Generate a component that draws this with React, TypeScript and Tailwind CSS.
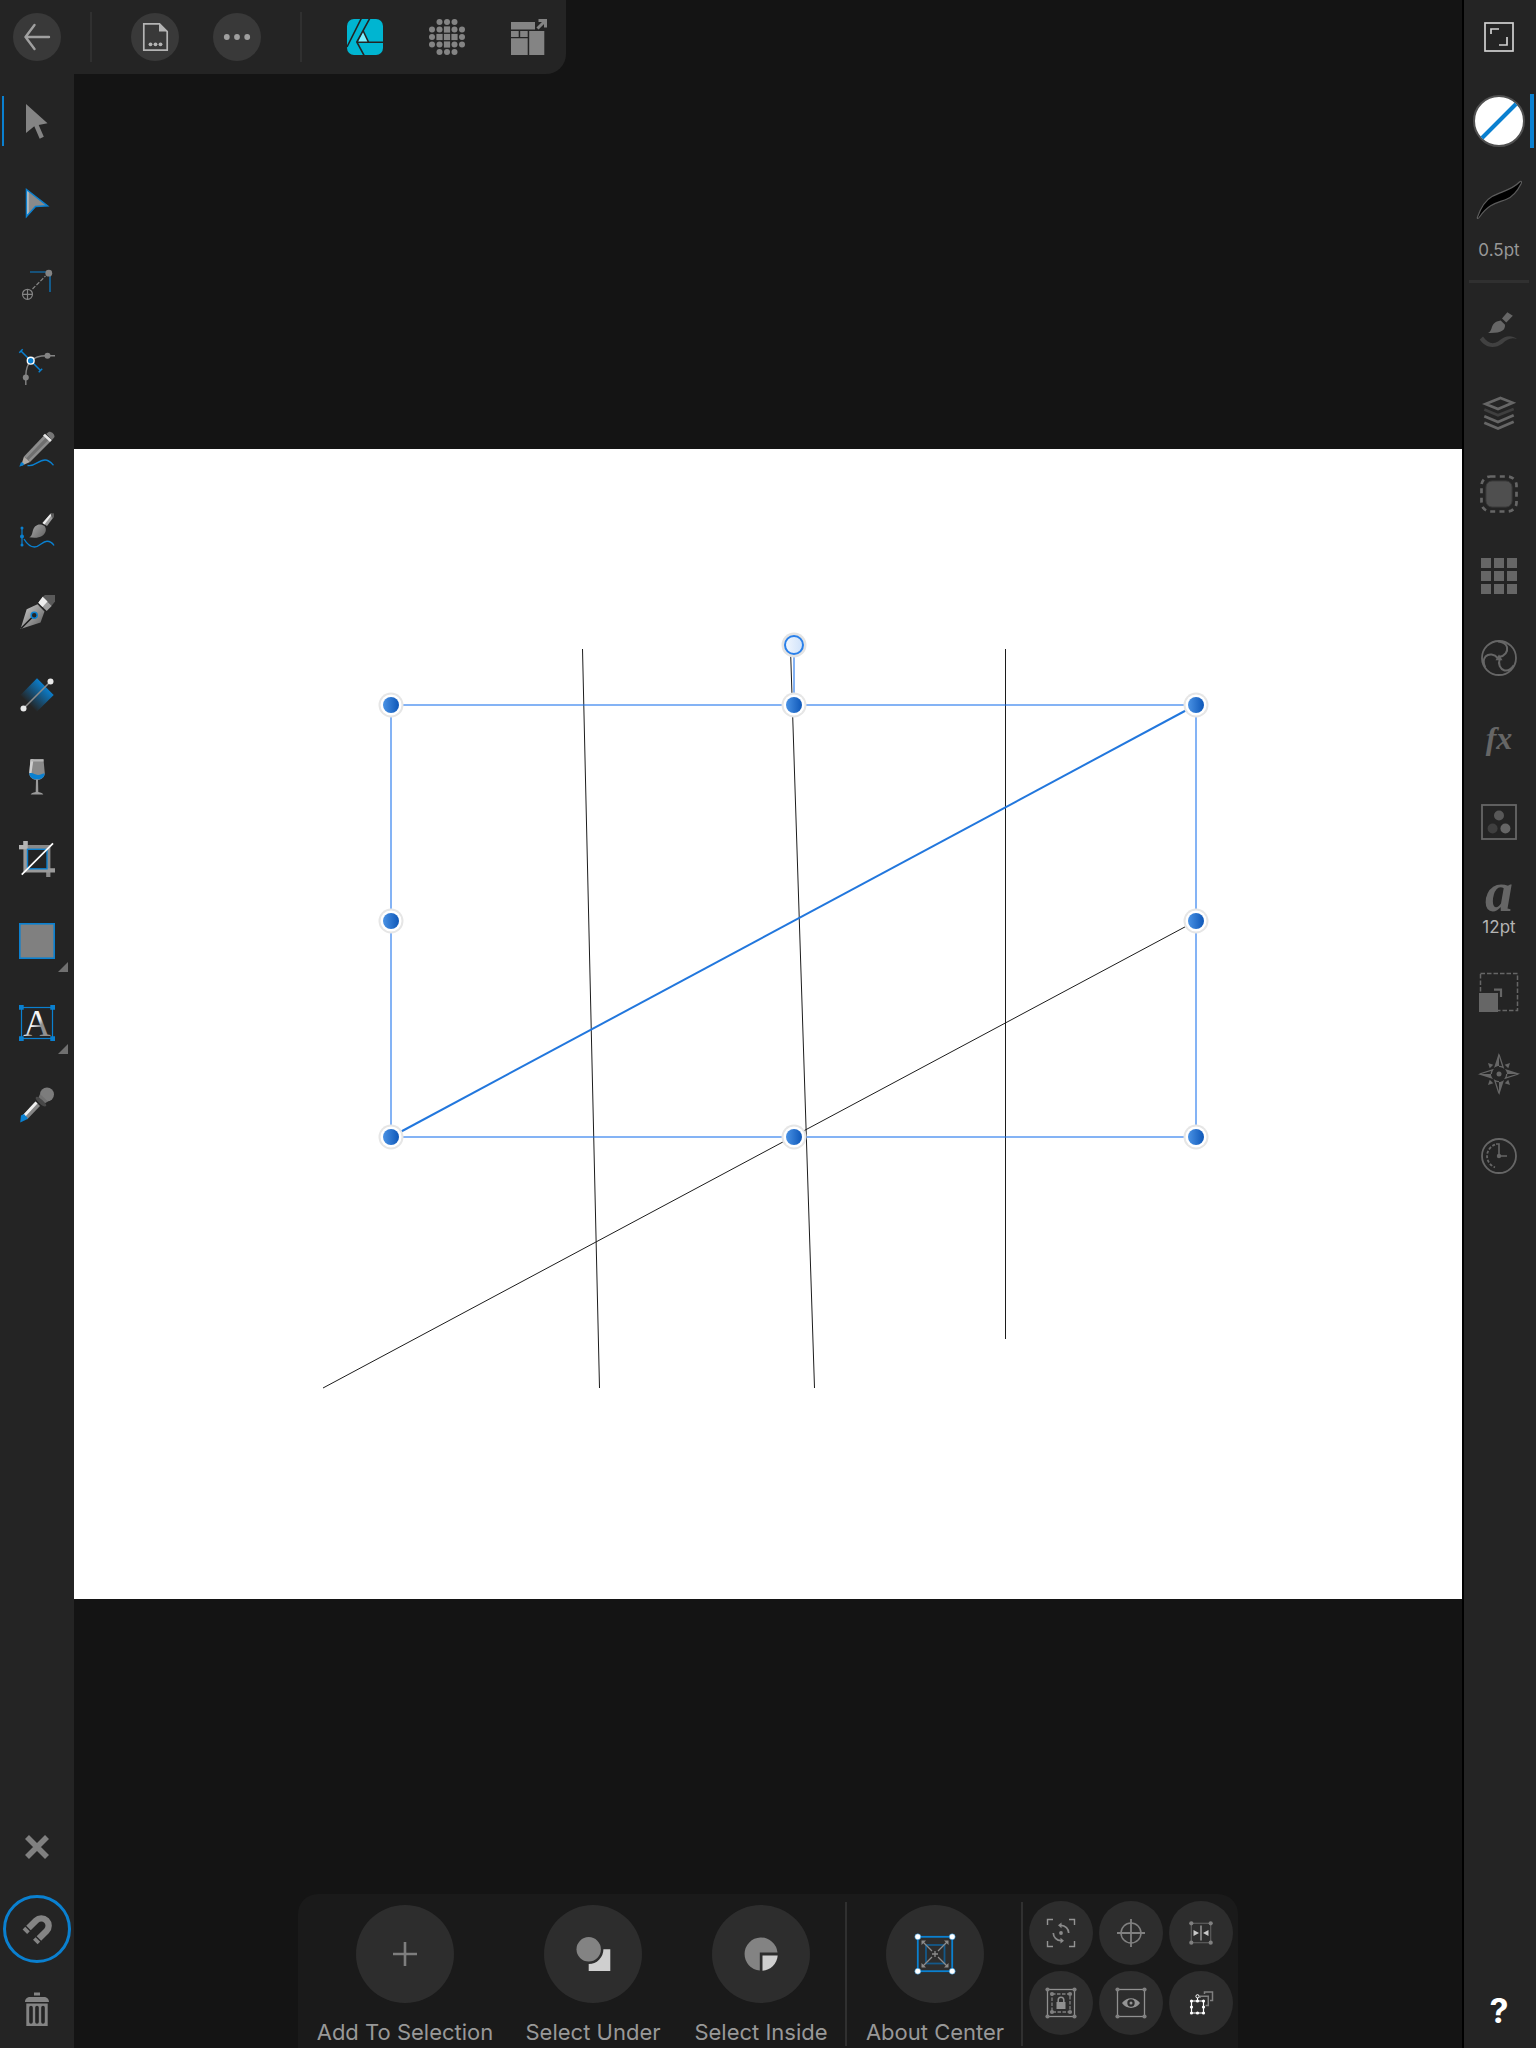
import type { ReactNode } from 'react';
import { clsx } from 'clsx';

const BLUE = '#0a80d0';
const GREY = '#848484';
const DIM = '#666666';

interface IconProps {
  size?: number;
  children: ReactNode;
}

const Icon = ({ size = 36, children }: IconProps) => (
  <svg className="overflow-visible" width={size} height={size} viewBox={`0 0 ${size} ${size}`} fill="none" aria-hidden="true">
    {children}
  </svg>
);

/* ---------- top bar ---------- */

const BackIcon = () => (
  <Icon size={48}>
    <path d="M36 24H12.5M21.5 12L12.5 24L21.5 36" stroke="#a0a0a0" strokeWidth="2.4" strokeLinecap="round" strokeLinejoin="round" />
  </Icon>
);

const DocumentIcon = () => (
  <Icon size={48}>
    <path d="M12.8 10.8H28.5L36.2 18.5V37.2H12.8Z" stroke="#b4b4b4" strokeWidth="1.7" />
    <path d="M28 10.5L36.8 18.5H28Z" fill="#b4b4b4" />
    <g fill="#b4b4b4">
      <circle cx="19.5" cy="31.3" r="1.9" />
      <circle cx="24.5" cy="31.3" r="1.9" />
      <circle cx="29.5" cy="31.3" r="1.9" />
    </g>
  </Icon>
);

const MoreIcon = () => (
  <Icon size={48}>
    <g fill="#a0a0a0">
      <circle cx="13.8" cy="24" r="2.9" />
      <circle cx="24" cy="24" r="2.9" />
      <circle cx="34.2" cy="24" r="2.9" />
    </g>
  </Icon>
);

const DesignerIcon = () => (
  <Icon>
    <defs>
      <clipPath id="badge">
        <rect width="36" height="36" rx="7" />
      </clipPath>
    </defs>
    <g clipPath="url(#badge)">
      <rect width="36" height="36" fill="#00b5d1" />
      <path d="M16.3 11L11 23.3H21.8Z" fill="#7df0ff" />
      <path d="M14.5 -1L0 28M23 -1L9.8 23L17.4 37M16 11.5L21.5 23.2M9.8 23.2H37" stroke="#242424" strokeWidth="1.6" />
    </g>
  </Icon>
);

const DOT_COLS = [3, 10.5, 18, 25.5, 33];

const PixelIcon = () => (
  <Icon>
    {DOT_COLS.map((y, row) =>
      DOT_COLS.map((x, col) => {
        const edge = (n: number) => n === 0 || n === 4;
        if (edge(row) && edge(col)) return null;
        const square = Math.abs(row - 2) + Math.abs(col - 2) <= 1;
        return square ? (
          <rect key={`${row}-${col}`} x={x - 3.1} y={y - 3.1} width="6.2" height="6.2" fill={GREY} />
        ) : (
          <circle key={`${row}-${col}`} cx={x} cy={y} r="3" fill={GREY} />
        );
      })
    )}
  </Icon>
);

const ExportIcon = () => (
  <Icon>
    <path d="M0 3H24V10.5H0ZM0 12H7.7V18H0ZM9.2 12H16.7V18H9.2ZM0 19.3H16.7V36H0ZM18.2 12H33.3V36H18.2Z" fill={GREY} />
    <path d="M26.5 9.5L33.5 2.5" stroke={GREY} strokeWidth="3" />
    <path d="M27.5 0H36V8.5H33V3H27.5Z" fill={GREY} />
  </Icon>
);

/* ---------- left tools ---------- */

const MoveIcon = () => (
  <Icon>
    <path d="M7 1L28.5 20.3L19.7 22L24.8 33.8L20.7 35.7L15.3 23.3L7 30Z" fill={GREY} />
  </Icon>
);

const NodeIcon = () => (
  <Icon>
    <defs>
      <linearGradient id="node" x1="7" x2="15" y1="18" y2="18" gradientUnits="userSpaceOnUse">
        <stop offset="0" stopColor="#ffffff" />
        <stop offset="0.45" stopColor="#8a8a8a" />
      </linearGradient>
    </defs>
    <path d="M7.5 4.5L28.5 20.8L16.5 21.5L7.500 31.500Z" fill="url(#node)" stroke={BLUE} strokeWidth="1.5" />
  </Icon>
);

const PointTransformIcon = () => (
  <Icon>
    <path d="M11 5H31V25" stroke={BLUE} strokeWidth="1.2" />
    <path d="M13.5 22L26.5 9" stroke={GREY} strokeWidth="1.2" strokeDasharray="4 1.6" />
    <circle cx="29.8" cy="6.2" r="3.4" fill={GREY} />
    <circle cx="8.5" cy="27.3" r="5" stroke={GREY} strokeWidth="1.2" />
    <path d="M3.5 27.3H13.5M8.5 22.3V32.3" stroke={GREY} strokeWidth="1.2" />
  </Icon>
);

const CornerIcon = () => (
  <Icon>
    <path d="M6.8 36V27C6.8 14 14 6.8 27 6.8H36" stroke={GREY} strokeWidth="1.4" />
    <circle cx="28.5" cy="6.8" r="3" fill={GREY} />
    <circle cx="6.8" cy="28.5" r="3" fill={GREY} />
    <path d="M2 2L21.5 21.5M0.3 3.7L3.7 0.3M19.7 23.2L23.2 19.7" stroke={BLUE} strokeWidth="1.5" />
    <circle cx="11.7" cy="11.7" r="3.4" fill={BLUE} stroke="#ffffff" strokeWidth="1.4" />
  </Icon>
);

const PencilIcon = () => (
  <Icon>
    <path d="M5 25.5L25 4.5L31.5 10.5L11 31Z" fill="#8c8c8c" />
    <path d="M7 27.5L27 6.5L29.5 9L9 29.5Z" fill="#6f6f6f" />
    <path d="M5 25.5L11 31L2 35Z" fill="#b0aca8" />
    <path d="M24 4.5L26 2.7L33 9L31 11Z" fill="#e6e6e6" />
    <path d="M27.3 2.8L30 0.8C33 0.8 35.5 3 35.5 6L33 9Z" fill="#767676" />
    <path d="M0.3 35.7L2 31.3C4 31.3 5 32.5 5 34Z" fill={BLUE} />
    <path d="M8.5 34.5C16 36 19 29 26 29C30 29 32 31.5 34.5 34.3" stroke={BLUE} strokeWidth="1.4" />
  </Icon>
);

const VectorBrushIcon = () => (
  <Icon>
    <defs>
      <linearGradient id="bristle" x1="12" x2="26" y1="10" y2="22" gradientUnits="userSpaceOnUse">
        <stop offset="0" stopColor="#a8a8a8" />
        <stop offset="1" stopColor="#6a6a6a" />
      </linearGradient>
    </defs>
    <path d="M10.3 24.3C14.5 22.5 12.5 17 16 13.5C19 10.5 23 11 25.5 13C28 16 27 20.5 23 23C19.5 25.3 14 24.8 10.3 24.3Z" fill="url(#bristle)" />
    <path d="M23.5 10L31.5 0.8H35V3.5L28 13Z" fill="#9a9a9a" />
    <path d="M23.5 10L31.5 0.8L33.5 1L25.5 11.5Z" fill="#ededed" />
    <path d="M31.5 0.8H35V4L33 5Z" fill="#5a5a5a" />
    <path d="M3 14.5V32.5" stroke={BLUE} strokeWidth="1.2" />
    <g fill={BLUE}>
      <circle cx="3" cy="15" r="1.5" />
      <circle cx="3" cy="23.5" r="2" />
      <circle cx="3" cy="32" r="1.5" />
    </g>
    <path d="M5 26C8 31 11 34 15.5 34C21 34 23 28.3 28 28.3C31 28.3 33.5 30 35 32.5" stroke={BLUE} strokeWidth="1.4" />
  </Icon>
);

const PenIcon = () => (
  <Icon>
    <defs>
      <linearGradient id="nib" x1="8" x2="24" y1="14" y2="28" gradientUnits="userSpaceOnUse">
        <stop offset="0" stopColor="#b5b5b5" />
        <stop offset="1" stopColor="#6c6c6c" />
      </linearGradient>
    </defs>
    <path d="M1.5 34L7.7 14.3L18.5 9.3L25.5 16.5L21.5 27.5Z" fill="url(#nib)" />
    <path d="M26 0H36V6.5L32.5 11L23.7 1.7Z" fill="#5a5a5a" />
    <path d="M19.3 7.7L23.7 1.7L32.7 11L27.7 16Z" fill="#a0a0a0" />
    <path d="M19.3 7.7L23.7 1.7L28.5 6.5L23.5 12Z" fill="#eeeeee" />
    <path d="M2 33.5L15 20.5" stroke="#1c1c1c" strokeWidth="1.6" />
    <circle cx="15.2" cy="20.3" r="3" fill="#242424" stroke={BLUE} strokeWidth="1.5" />
  </Icon>
);

const GradientIcon = () => (
  <Icon>
    <defs>
      <linearGradient id="fill" x1="10" x2="27" y1="26" y2="9" gradientUnits="userSpaceOnUse">
        <stop offset="0" stopColor={BLUE} stopOpacity="0.05" />
        <stop offset="1" stopColor={BLUE} />
      </linearGradient>
    </defs>
    <path d="M18 1.3L34.7 18L18 34.5L1.5 18Z" fill="url(#fill)" />
    <path d="M4.5 31.5L31.5 4.5" stroke="#8c8c8c" strokeWidth="1.6" />
    <circle cx="4.5" cy="31.5" r="3" fill="#e8e8e8" />
    <circle cx="31.5" cy="4.5" r="3" fill="#e8e8e8" />
  </Icon>
);

const GlassIcon = () => (
  <Icon>
    <path d="M11.5 0.3H24.5L25.8 14.5C25.5 19 21 21 18 21.3C15 21 10.5 19 10.2 14.5Z" fill="#8a8a8a" />
    <path d="M11.5 0.3H14.5L12.5 14H10.2Z" fill="#cfcfcf" />
    <path d="M12.5 0.3H24.5V2.5H12.3Z" fill="#b4b4b4" />
    <path d="M10.2 14.5C14 13 16 16.5 19.5 16C22 15.5 23.5 14 25.8 14.5C25.5 19 21 20.5 18 20.5C15 20.5 10.5 19 10.2 14.5Z" fill={BLUE} />
    <path d="M17 20.500H19L19.3 33C22 33.5 24 34.3 24.3 35.5H11.7C12 34.3 14 33.5 16.7 33Z" fill="#9a9a9a" />
  </Icon>
);

const CropIcon = () => (
  <Icon>
    <path d="M0 6.2H29.3V36" stroke="#8a8a8a" strokeWidth="4.2" />
    <path d="M6.5 0V29.3H36" stroke="#9a9a9a" strokeWidth="4.2" />
    <path d="M0 6.2H8.5M6.5 0V8" stroke="#b4b4b4" strokeWidth="4.2" />
    <rect x="8.5" y="8.3" width="19.5" height="19.5" fill="#242424" stroke={BLUE} strokeWidth="1.4" />
    <path d="M2.7 33.7L34 2.3" stroke="#ffffff" strokeWidth="1.7" />
  </Icon>
);

const RectangleIcon = () => (
  <Icon>
    <rect x="0.8" y="0.8" width="34.4" height="34.4" fill="#808080" stroke={BLUE} strokeWidth="1.6" />
  </Icon>
);

const TextIcon = () => (
  <Icon>
    <defs>
      <linearGradient id="letter" x1="12" x2="25" y1="12" y2="25" gradientUnits="userSpaceOnUse">
        <stop offset="0.4" stopColor="#f5f5f5" />
        <stop offset="0.7" stopColor="#909090" />
      </linearGradient>
    </defs>
    <rect x="2.5" y="2.5" width="31" height="31" stroke={BLUE} strokeWidth="1.2" />
    <path d="M0 0H4.7V4.7H0ZM31.3 0H36V4.7H31.3ZM0 31.3H4.7V36H0ZM31.3 31.3H36V36H31.3Z" fill={BLUE} />
    <text x="18" y="31" textAnchor="middle" fill="url(#letter)" fontFamily="Liberation Serif, serif" fontSize="38">
      A
    </text>
  </Icon>
);

const PickerIcon = () => (
  <Icon>
    <path d="M3.5 28.5L16.5 14.5L21 19L8 32.5Z" fill="#858585" />
    <path d="M3.5 28.5L16.5 14.5L18.5 16.5L5.5 30.5Z" fill="#f0f0f0" />
    <path d="M1.2 35.5L2 28.5L5 27L9 31.5L6.5 33Z" fill={BLUE} />
    <circle cx="28" cy="7.5" r="7" fill="#7c7c7c" />
    <path d="M21 7L29 14.5L25.5 16.5L19.5 10.5Z" fill="#707070" />
    <path d="M17.5 10.5C19 9.5 27 17 26.5 18.5C25 20 16 12 17.5 10.5Z" fill="#484848" stroke="#484848" strokeWidth="1.5" />
  </Icon>
);

const DeselectIcon = () => (
  <Icon>
    <path d="M8 8L28 28M28 8L8 28" stroke="#808080" strokeWidth="5.6" />
  </Icon>
);

const MagnetIcon = () => (
  <Icon>
    <path
      d="M9.5 17.1L17.1 9.5A7.3 7.3 0 0 1 27.5 19.9L19.9 27.5M8.5 18.1L5.9 20.7M18.9 28.5L16.3 31.1"
      stroke={GREY}
      strokeWidth="6.4"
    />
  </Icon>
);

const TrashIcon = () => (
  <Icon>
    <path d="M15 1.5H21V4.5H15ZM6 11C6 7.5 8.5 6 11 6H25C27.5 6 30 7.5 30 11Z" fill={GREY} />
    <path d="M7.3 12.5H28.7V35H7.3Z" fill={GREY} />
    <path d="M12 16.5V31M18 16.5V31M24 16.5V31" stroke="#242424" strokeWidth="3.6" strokeLinecap="round" />
  </Icon>
);

/* ---------- right studios ---------- */

const FullscreenIcon = () => (
  <Icon size={40}>
    <rect x="6" y="6" width="28" height="28" stroke="#d0d0d0" strokeWidth="1.7" />
    <path d="M12 17V12H20M20 28H28V20" stroke="#d0d0d0" strokeWidth="1.7" />
  </Icon>
);

const StrokeIcon = () => (
  <svg width="48" height="42" viewBox="0 0 48 42" fill="none" aria-hidden="true">
    <path
      d="M2.5 38C5 31 9 22 17 17.5C26 12.5 37 11 44.5 3C46 1.5 47 2.5 46.2 4.5C43 11 39 17.5 31 20.5C22 24 14 24.5 4.5 38C3.2 40 1.8 40 2.5 38Z"
      fill="#000000"
      stroke="#5c5c5c"
      strokeWidth="1.2"
    />
  </svg>
);

const BrushesIcon = () => (
  <Icon size={40}>
    <path d="M28.3 2.3L33.8 5.8L27.3 12.5L23 8.5Z" fill={DIM} />
    <path d="M21.7 10.5L26 14.8C26.5 20.5 22 23.5 9 23C13 21 12 17 14.5 14C16.5 11.5 19 11 21.7 10.5Z" fill={DIM} />
    <path d="M4 26.5C9 33 13 35 19 31.5C26 26 32 24.5 38 29C32 27 28 29.5 23.5 33.5C15 39.5 6 37.5 0.8 29.5Z" fill="#414141" />
  </Icon>
);

const LayersIcon = () => (
  <Icon size={40}>
    <path d="M5.3 17.5L19 23.3L34.7 17" stroke="#3f3f3f" strokeWidth="2.8" />
    <path d="M21.5 6L33.8 10.8L19 17L6.5 12Z" stroke={DIM} strokeWidth="2.6" />
    <path d="M5.3 24.3L19 30L34.7 23.3M5.3 30.8L19 36.5L34.7 29.8" stroke={DIM} strokeWidth="2.8" />
  </Icon>
);

const SelectionIcon = () => (
  <Icon size={40}>
    <rect x="2.5" y="2.5" width="35" height="35" rx="9" stroke={DIM} strokeWidth="2.7" strokeDasharray="5 4.3" />
    <rect x="7" y="7" width="26" height="26" rx="6" fill="#4f4f4f" stroke="#3c3c3c" />
  </Icon>
);

const SwatchesIcon = () => (
  <Icon size={40}>
    <path
      d="M2 2h10v10h-10zM15 2h10v10h-10zM28 2h10v10h-10zM2 15h10v10h-10zM15 15h10v10h-10zM28 15h10v10h-10zM2 28h10v10h-10zM15 28h10v10h-10zM28 28h10v10h-10z"
      fill={DIM}
    />
  </Icon>
);

const AdjustmentsIcon = () => (
  <Icon size={40}>
    <circle cx="20" cy="20" r="17" stroke={DIM} strokeWidth="1.8" />
    <path d="M20 16.5L23.5 22.2H16.5Z" fill={DIM} />
    {[0, 120, 240].map(angle => (
      <path key={angle} d="M20 19C26 18 29 13.5 28 9C27 6 24 3.8 19 3.5" stroke={DIM} strokeWidth="2" transform={`rotate(${angle} 20 20)`} />
    ))}
  </Icon>
);

const EffectsIcon = () => (
  <Icon size={40}>
    <text x="20" y="29" textAnchor="middle" fill={DIM} fontFamily="Liberation Serif, serif" fontWeight="bold" fontStyle="italic" fontSize="32">
      fx
    </text>
  </Icon>
);

const ColourIcon = () => (
  <Icon size={40}>
    <rect x="3" y="3" width="34" height="34" stroke={DIM} strokeWidth="1.8" />
    <circle cx="20" cy="13.5" r="5" fill="#585858" />
    <circle cx="13.6" cy="26.5" r="5" fill="#3f3f3f" />
    <circle cx="26.4" cy="26.5" r="5" fill={DIM} />
  </Icon>
);

const CharacterIcon = () => (
  <svg className="overflow-visible" width="40" height="30" viewBox="0 0 40 30" aria-hidden="true">
    <text x="20" y="28" textAnchor="middle" fill={DIM} fontFamily="Liberation Serif, serif" fontWeight="bold" fontStyle="italic" fontSize="56">
      a
    </text>
  </svg>
);

const TransformIcon = () => (
  <Icon size={40}>
    <rect x="1.5" y="1.5" width="37" height="37" stroke={DIM} strokeWidth="1.5" strokeDasharray="4.5 2" />
    <rect x="0" y="21" width="19" height="19" fill={DIM} />
    <path d="M15 17.7H22V25" stroke={DIM} strokeWidth="2.2" />
  </Icon>
);

const NavigatorIcon = () => (
  <Icon size={44}>
    {[0, 90, 180, 270].map(angle => (
      <g key={angle} transform={`rotate(${angle} 22 22)`}>
        <path d="M22 0.5L17 16C19 14.5 20.500 14 22 14Z" fill={DIM} />
        <path d="M22 2.5L26.200 15.500C24.5 14.5 23.5 14.3 22 14.3" stroke={DIM} strokeWidth="1.3" />
        <path d="M33 11L31.3 16.3L27.7 12.7Z" fill={DIM} />
      </g>
    ))}
    <circle cx="22" cy="22" r="2.5" fill={DIM} />
  </Icon>
);

const HistoryIcon = () => (
  <Icon size={40}>
    <circle cx="20" cy="20" r="17" stroke={DIM} strokeWidth="1.8" />
    <path d="M17 8H20V20H28" stroke={DIM} strokeWidth="1.6" />
    <circle cx="20" cy="20" r="2.2" fill={DIM} />
    <path d="M16 8.7A12 12 0 0 0 16 31.3" stroke={DIM} strokeWidth="1.8" strokeDasharray="3 1.6" />
  </Icon>
);

/* ---------- context bar ---------- */

const AddIcon = () => (
  <Icon size={40}>
    <path d="M8 20H32M20 8V32" stroke="#7e7e7e" strokeWidth="2.6" />
  </Icon>
);

const UnderIcon = () => (
  <Icon size={40}>
    <circle cx="15.7" cy="15.3" r="12.2" fill="#838383" />
    <path d="M15.7 37V30A14.7 14.7 0 0 0 30.4 15.3H37.3V37Z" fill="#cfcfcf" />
  </Icon>
);

const InsideIcon = () => (
  <Icon size={40}>
    <path d="M18.8 36.5A16.5 16.5 0 1 1 36.5 18.5H18.8Z" fill="#838383" />
    <path d="M21.5 21.5H36.7A16.5 16.5 0 0 1 21.5 36.7Z" fill="#cfcfcf" />
  </Icon>
);

const CenterIcon = () => (
  <Icon size={40}>
    <rect x="11" y="11" width="18.5" height="18.5" stroke="#13598a" strokeWidth="1.8" />
    <rect x="2.8" y="2.8" width="34.4" height="34.4" stroke={BLUE} strokeWidth="1.8" />
    <path d="M8 8L17 17M32 8L23 17M8 32L17 23M32 32L23 23M20 17V23M17 20H23" stroke="#8c8c8c" strokeWidth="1.3" />
    <path d="M6.5 6.5H11L6.5 11ZM33.5 6.5V11L29 6.5ZM6.5 33.5V29L11 33.5ZM33.5 33.5H29L33.5 29Z" fill="#8c8c8c" />
    {[2.8, 37.2].map(x =>
      [2.8, 37.2].map(y => <circle key={`${x}-${y}`} cx={x} cy={y} r="3" fill="#ffffff" stroke={BLUE} strokeWidth="0.5" />)
    )}
  </Icon>
);

const CycleBoxIcon = () => (
  <Icon size={32}>
    <path d="M8 2.5H2.5V8M24 2.5H29.5V8M8 29.5H2.5V24M24 29.5H29.5V24" stroke="#949494" strokeWidth="1.4" />
    <path d="M16 8.3A7.7 7.7 0 0 1 23.7 16M16 23.7A7.7 7.7 0 0 1 8.3 16" stroke="#8a8a8a" strokeWidth="1.7" />
    <path d="M16.5 5.5V11.2L13 8.3ZM15.5 20.8V26.5L19 23.7Z" fill="#8a8a8a" />
    <circle cx="16" cy="16" r="1.9" fill="#8a8a8a" />
  </Icon>
);

const TargetIcon = () => (
  <Icon size={32}>
    <circle cx="16" cy="16" r="10" stroke="#808080" strokeWidth="1.5" />
    <path d="M2 16H30M16 2V30" stroke="#808080" strokeWidth="1.8" />
  </Icon>
);

interface CornersProps {
  from: number;
  to: number;
}

const Corners = ({ from, to }: CornersProps) => (
  <>
    {[from, to].map(x => [from, to].map(y => <circle key={`${x}-${y}`} cx={x} cy={y} r="2.1" fill="#808080" />))}
  </>
);

const MirrorIcon = () => (
  <Icon size={32}>
    <rect x="6.3" y="6.3" width="19.4" height="19.4" stroke="#5c5c5c" strokeWidth="1.2" />
    <Corners from={6.3} to={25.7} />
    <path d="M16 8.5V23.5" stroke="#909090" strokeWidth="1.6" />
    <path d="M8.5 13L14 16L8.5 19ZM23.5 13L18 16L23.5 19Z" fill="#c8c8c8" />
  </Icon>
);

const LockIcon = () => (
  <Icon size={32}>
    <rect x="2.5" y="2.5" width="27" height="27" stroke="#909090" strokeWidth="1.3" />
    <Corners from={2.5} to={29.5} />
    <rect x="7" y="7" width="18" height="18" stroke="#808080" strokeWidth="1.3" strokeDasharray="3.5 1.5" />
    <Corners from={7} to={25} />
    <rect x="11.5" y="15" width="9" height="7" fill="#909090" />
    <path d="M13.2 15V13A2.8 2.8 0 0 1 18.8 13V15" stroke="#909090" strokeWidth="1.5" />
  </Icon>
);

const EyeIcon = () => (
  <Icon size={32}>
    <rect x="2.5" y="2.5" width="27" height="27" stroke="#909090" strokeWidth="1.3" />
    <Corners from={2.5} to={29.5} />
    <path d="M7 16C11.5 9.5 20.5 9.5 25 16C20.5 22.5 11.5 22.5 7 16Z" fill="#949494" />
    <circle cx="16" cy="16" r="3.7" fill="#2d2d2d" />
    <circle cx="16" cy="16" r="1.5" fill="#949494" />
  </Icon>
);

const DuplicateIcon = () => (
  <Icon size={32}>
    <path d="M19.5 7V5H27.5V13.5H25M15 9.3H23.3V18.5H20.5M15 9.3V11" stroke="#808080" strokeWidth="1.5" />
    <path d="M6.5 14H18.5V26H6.5ZM12.5 14V10" stroke="#ffffff" strokeWidth="1.2" />
    <circle cx="12.5" cy="9.3" r="1.6" fill="#2d2d2d" stroke="#ffffff" />
    {[6.5, 12.5, 18.5].map(x =>
      [14, 20, 26].map(y => (x === 12.5 && y === 20 ? null : <circle key={`${x}-${y}`} cx={x} cy={y} r="1.6" fill="#ffffff" />))
    )}
  </Icon>
);

interface Tool {
  label: string;
  icon: ReactNode;
  more?: boolean;
}

const tools: Tool[] = [
  { label: 'Move Tool', icon: <MoveIcon /> },
  { label: 'Node Tool', icon: <NodeIcon /> },
  { label: 'Point Transform Tool', icon: <PointTransformIcon /> },
  { label: 'Corner Tool', icon: <CornerIcon /> },
  { label: 'Pencil Tool', icon: <PencilIcon /> },
  { label: 'Vector Brush Tool', icon: <VectorBrushIcon /> },
  { label: 'Pen Tool', icon: <PenIcon /> },
  { label: 'Fill Tool', icon: <GradientIcon /> },
  { label: 'Transparency Tool', icon: <GlassIcon /> },
  { label: 'Vector Crop Tool', icon: <CropIcon /> },
  { label: 'Rectangle Tool', icon: <RectangleIcon />, more: true },
  { label: 'Text Tool', icon: <TextIcon />, more: true },
  { label: 'Colour Picker Tool', icon: <PickerIcon /> },
];

const studios: Tool[] = [
  { label: 'Brushes', icon: <BrushesIcon /> },
  { label: 'Layers', icon: <LayersIcon /> },
  { label: 'Selection', icon: <SelectionIcon /> },
  { label: 'Swatches', icon: <SwatchesIcon /> },
  { label: 'Adjustments', icon: <AdjustmentsIcon /> },
  { label: 'Layer FX', icon: <EffectsIcon /> },
  { label: 'Colour', icon: <ColourIcon /> },
];

const lowerStudios: Tool[] = [
  { label: 'Transform', icon: <TransformIcon /> },
  { label: 'Navigator', icon: <NavigatorIcon /> },
  { label: 'History', icon: <HistoryIcon /> },
];

const selectActions: Tool[] = [
  { label: 'Add To Selection', icon: <AddIcon /> },
  { label: 'Select Under', icon: <UnderIcon /> },
  { label: 'Select Inside', icon: <InsideIcon /> },
];

const toggles: Tool[] = [
  { label: 'Cycle Selection Box', icon: <CycleBoxIcon /> },
  { label: 'Show Rotation Center', icon: <TargetIcon /> },
  { label: 'Transform Mode', icon: <MirrorIcon /> },
  { label: 'Lock Children', icon: <LockIcon /> },
  { label: 'Hide Selection', icon: <EyeIcon /> },
  { label: 'Duplicate', icon: <DuplicateIcon /> },
];

const TopBar = () => (
  <header className="flex h-[74px] w-fit items-center rounded-br-[20px] bg-[#242424] px-[13px]">
    <button aria-label="Back" className="size-12 rounded-full bg-[#393939]">
      <BackIcon />
    </button>
    <div className="mr-[39px] ml-[29px] h-[50px] w-0.5 bg-[#303030]" />
    <div className="flex gap-[34px]">
      <button aria-label="Document" className="size-12 rounded-full bg-[#393939]">
        <DocumentIcon />
      </button>
      <button aria-label="Edit" className="size-12 rounded-full bg-[#393939]">
        <MoreIcon />
      </button>
    </div>
    <div className="mx-[39px] h-[50px] w-0.5 bg-[#303030]" />
    <nav className="flex gap-[34px]">
      <button aria-label="Designer Persona" className="grid size-12 place-items-center">
        <DesignerIcon />
      </button>
      <button aria-label="Pixel Persona" className="grid size-12 place-items-center">
        <PixelIcon />
      </button>
      <button aria-label="Export Persona" className="grid size-12 place-items-center">
        <ExportIcon />
      </button>
    </nav>
  </header>
);

const ToolBar = () => (
  <aside className="flex w-[74px] shrink-0 flex-col bg-[#242424] pt-1.5">
    {tools.map((tool, i) => (
      <button key={tool.label} aria-label={tool.label} className="relative grid h-[82px] place-items-center">
        {i === 0 && <span className="absolute top-4 left-0.5 h-[50px] w-0.5 bg-[#0a80d0]" />}
        {tool.icon}
        {tool.more && (
          <svg className="absolute right-1.5 bottom-2.5" width="10" height="10" viewBox="0 0 10 10" aria-hidden="true">
            <path d="M10 0V10H0Z" fill="#707070" />
          </svg>
        )}
      </button>
    ))}
    <div className="mt-auto flex flex-col">
      <button aria-label="Deselect" className="grid h-[82px] place-items-center">
        <DeselectIcon />
      </button>
      <button aria-label="Snapping" className="grid h-[82px] place-items-center">
        <span className="grid size-[68px] place-items-center rounded-full border-3 border-[#0a80d0]">
          <MagnetIcon />
        </span>
      </button>
      <button aria-label="Delete" className="grid h-[78px] place-items-center">
        <TrashIcon />
      </button>
    </div>
  </aside>
);

const handles = [
  [391, 705],
  [794, 705],
  [1196, 705],
  [391, 921],
  [1196, 921],
  [391, 1137],
  [794, 1137],
  [1196, 1137],
];

// coordinates are in window space, the page starts at 74,449
const Artwork = () => (
  <svg className="mt-[375px] block w-full shrink-0 bg-white" viewBox="74 449 1388 1150" fill="none" role="img" aria-label="Artboard">
    <defs>
      <linearGradient id="handle">
        <stop offset="0" stopColor="#4a92e4" />
        <stop offset="1" stopColor="#0e57b8" />
      </linearGradient>
      <linearGradient id="rotate">
        <stop offset="0" stopColor="#f2f7fe" />
        <stop offset="1" stopColor="#cfe2fa" />
      </linearGradient>
    </defs>
    <g stroke="#1c1c1c" strokeWidth="1">
      <path d="M582.5 649L599.5 1388" />
      <path d="M790.5 649L814.5 1388" />
      <path d="M1005.5 649V1339" />
      <path d="M323 1388L1196 921" />
    </g>
    <path d="M391 705H1196V1137H391ZM794 645V705" stroke="#1670ec" strokeOpacity="0.53" strokeWidth="2" />
    <path d="M391 1137L1196 705" stroke="#2277dd" strokeWidth="2" />
    {handles.map(([x, y]) => (
      <g key={`${x}-${y}`}>
        <circle cx={x} cy={y} r="12.5" fill="#e6e6e6" />
        <circle cx={x} cy={y} r="10.5" fill="#ffffff" />
        <circle cx={x} cy={y} r="8" fill="url(#handle)" />
      </g>
    ))}
    <circle cx="794" cy="645" r="12.5" fill="#e3e3e3" />
    <circle cx="794" cy="645" r="9" fill="url(#rotate)" stroke="#2a80ea" strokeWidth="2" />
  </svg>
);

interface ActionProps {
  tool: Tool;
  wide?: boolean;
}

const Action = ({ tool, wide }: ActionProps) => (
  <button className={clsx('flex flex-col items-center gap-[17px]', wide ? 'w-[176px]' : 'w-[136px]')}>
    <span className="grid size-[98px] place-items-center rounded-full bg-[#2d2d2d]">{tool.icon}</span>
    <span className="text-[22px] leading-6 whitespace-nowrap">{tool.label}</span>
  </button>
);

const ContextBar = () => (
  <footer className="mx-auto mt-auto flex h-[154px] items-start rounded-t-[20px] bg-[#1a1a1a] pr-[5px] pl-[19px] text-[#989898]">
    <div className="flex gap-8 pt-[11px]">
      {selectActions.map((tool, i) => (
        <Action key={tool.label} tool={tool} wide={i === 0} />
      ))}
    </div>
    <div className="mt-2 mr-5 ml-4 h-36 w-0.5 bg-[#303030]" />
    <div className="pt-[11px]">
      <Action tool={{ label: 'About Center', icon: <CenterIcon /> }} />
    </div>
    <div className="mt-2 mr-1.5 ml-[18px] h-36 w-0.5 bg-[#303030]" />
    <div className="grid grid-cols-3 gap-1.5 pt-[7px]">
      {toggles.map(tool => (
        <button key={tool.label} aria-label={tool.label} className="grid size-16 place-items-center rounded-full bg-[#2d2d2d]">
          {tool.icon}
        </button>
      ))}
    </div>
  </footer>
);

const StudioBar = () => (
  <aside className="flex w-[74px] shrink-0 flex-col border-l-2 border-black bg-[#242424] pr-0.5 text-[#989898]">
    <button aria-label="Toggle UI" className="grid h-20 place-items-center pb-1.5">
      <FullscreenIcon />
    </button>
    <button aria-label="Fill colour" className="relative grid h-[82px] place-items-center">
      <svg width="52" height="52" viewBox="0 0 52 52" aria-hidden="true">
        <circle cx="26" cy="26" r="25" fill="#ffffff" stroke="#505050" strokeWidth="2" />
        <path d="M9 43L43 9" stroke={BLUE} strokeWidth="4" />
      </svg>
      <span className="absolute top-3.5 right-0 h-[54px] w-1 bg-[#0a80d0]" />
    </button>
    <button className="flex h-[118px] flex-col items-center gap-[17px] pt-[17px]">
      <StrokeIcon />
      <span className="text-[17px] leading-6">0.5pt</span>
    </button>
    <div className="mx-[5px] mb-1.5 h-[3px] bg-[#303030]" />
    {studios.map(tool => (
      <button key={tool.label} aria-label={tool.label} className="grid h-[82px] place-items-center">
        {tool.icon}
      </button>
    ))}
    <button className="flex h-[88px] flex-col items-center gap-0.5 pt-5">
      <CharacterIcon />
      <span className="text-[17px] leading-6 text-[#b4b4b4]">12pt</span>
    </button>
    {lowerStudios.map(tool => (
      <button key={tool.label} aria-label={tool.label} className="grid h-[82px] place-items-center">
        {tool.icon}
      </button>
    ))}
    <button className="mt-auto h-[74px] text-[34px] leading-none font-bold text-white">?</button>
  </aside>
);

const App = () => (
  <div className="flex min-h-screen bg-[#141414] font-['Inter',sans-serif]">
    <div className="flex min-w-0 flex-1 flex-col">
      <TopBar />
      <div className="flex flex-1">
        <ToolBar />
        <main className="flex min-w-0 flex-1 flex-col">
          <Artwork />
          <ContextBar />
        </main>
      </div>
    </div>
    <StudioBar />
  </div>
);

export default App;
